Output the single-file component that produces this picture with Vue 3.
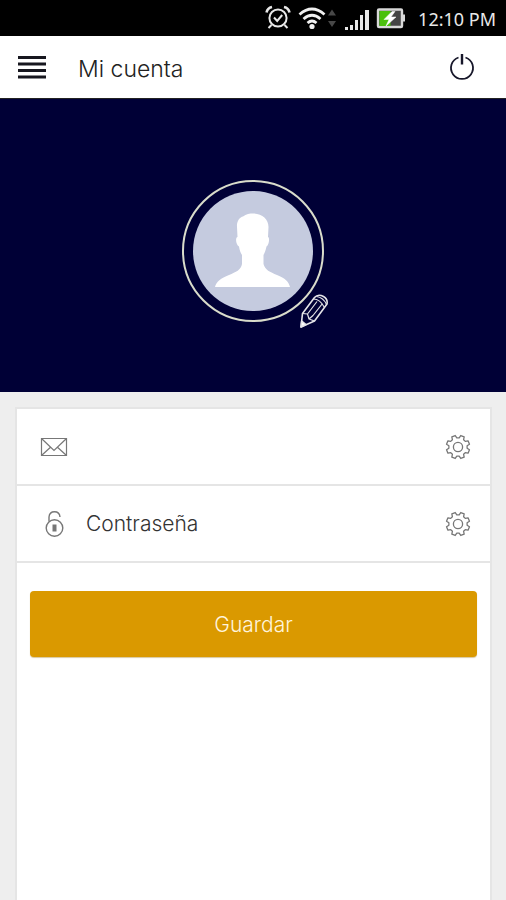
<script setup>
import { ref } from 'vue'

const email = ref('')
const password = ref('')

// Eight-toothed cog outline around (14, 14)
const gearPath = (() => {
  const points = []
  const at = (deg, r) => {
    const a = (deg * Math.PI) / 180
    points.push(`${(14 + r * Math.cos(a)).toFixed(2)} ${(14 + r * Math.sin(a)).toFixed(2)}`)
  }
  for (let i = 0; i < 8; i++) {
    const c = 22.5 + i * 45
    at(c - 15, 9.2)
    at(c - 9, 11.8)
    at(c + 9, 11.8)
    at(c + 15, 9.2)
  }
  return `M${points.join('L')}Z`
})()
</script>

<template>
  <div class="screen">
    <div class="status">
      <svg class="status-icons" width="142" height="28" viewBox="264 4 142 28" aria-hidden="true">
        <g fill="none" stroke="#e8e8e8" stroke-width="2">
          <circle cx="278" cy="18" r="8.6" />
          <path d="M274 17.500l3.200 3.500l5-6M271.500 25l-3 3M284.500 25l3 3" />
          <path d="M266.500 12.500q1-4.500 5.500-5.500M289.500 12.500q-1-4.500-5.500-5.500" stroke-width="2.600" />
        </g>
        <g fill="none" stroke="#f0f0f0" stroke-width="2.800">
          <path d="M299.500 14.500q12.500-11 25 0M303.500 19q8.500-7.500 17 0M307.500 23q4.500-4 9 0" />
        </g>
        <circle cx="312" cy="26.500" r="2.600" fill="#f0f0f0" />
        <path d="M328 15.500l4-6l4 6zM328 21l4 6l4-6z" fill="#484848" />
        <path d="M345 27h3v3h-3zM350 25h3v5h-3zM355 20h3v10h-3zM360 15h3v15h-3zM365 10h4v20h-4z" fill="#e8e8e8" />
        <rect x="378" y="9.500" width="24" height="17.500" rx="1" fill="#444" stroke="#d8d8d8" stroke-width="2.400" />
        <path d="M379.500 11h11v15h-11z" fill="#4bc00c" />
        <path d="M402 14.500h3v7h-3z" fill="#d8d8d8" />
        <path d="M392 11.500l-8 8h5l-3 6.500l10-9h-5l4-5.500z" fill="#fff" stroke="#fff" stroke-width=".5" />
      </svg>
      <span class="clock">12:10 PM</span>
    </div>

    <header class="bar">
      <button class="icon-button" type="button" aria-label="Menú">
        <svg width="30" height="24" viewBox="0 0 30 24">
          <path d="M1 2.500h28M1 9h28M1 15.500h28M1 22h28" stroke="#17171f" stroke-width="2.800" />
        </svg>
      </button>
      <h1>Mi cuenta</h1>
      <button class="icon-button" type="button" aria-label="Salir">
        <svg width="28" height="28" viewBox="0 0 28 28" fill="none" stroke="#17172a">
          <path d="M10.500 4.500a11 11 0 1 0 7 0" stroke-width="1.800" />
          <path d="M14 1v10.500" stroke-width="2.400" />
        </svg>
      </button>
    </header>

    <section class="hero">
      <div class="avatar">
        <svg class="portrait" width="120" height="120" viewBox="0 0 120 120" aria-hidden="true">
          <circle cx="60" cy="60" r="60" fill="#c5cbdf" />
          <path
            d="M60 22.500C69 22.500 75.500 28 75.500 36L75 46C77 46.500 76 54 73.500 55.500C72.500 60 71.500 62 70.500 64V73C72 79 77 81 84 84C92 87 96 91 97 96H22C23 91 28 87 36 84C43 81 48 79 49 73V64C47.500 62 46.500 59 46 55.500C43 54 42 46.500 44.500 46L44 36C43.500 30 47 26 50 25.500C53 23 57 22.500 60 22.500Z"
            fill="#fff"
          />
        </svg>
        <button class="edit" type="button" aria-label="Cambiar foto">
          <svg width="30" height="34" viewBox="0 0 30 34" fill="none" stroke="#e4e4e8" stroke-width="1.600" stroke-linejoin="round">
            <path d="M2 33L3.500 19.500L15.500 3.500Q19-.5 24.500 2.500Q29 5 28 10L15.500 27Z" />
            <path d="M3.500 19.500L8.500 20L10 25L15.500 27M8.500 20L18 7.500M10 25L14 21.500L23.500 9.500M14.500 5Q21 5 25.500 13.500M17.500 2.500Q24.500 3.500 27.500 10.500" stroke-width="1.200" />
            <path d="M2 33l.700-6l4.300 3.500z" fill="#fff" />
          </svg>
        </button>
      </div>
    </section>

    <main class="content">
      <form class="card" @submit.prevent>
        <div class="row">
          <label class="lead" for="email" aria-label="Correo electrónico">
            <svg width="28" height="28" viewBox="0 0 28 28" fill="none" stroke="#777" stroke-width="1.200">
              <path d="M1.500 5.500h25v17h-25zM1.500 5.500L14 17.500L26.500 5.500M1.500 22.500L10.500 14.200M26.500 22.500L17.500 14.200" />
            </svg>
          </label>
          <input id="email" v-model="email" type="email" />
          <button class="icon-button" type="button" aria-label="Configurar correo">
            <svg width="28" height="28" viewBox="0 0 28 28" fill="none" stroke="#777" stroke-width="1.300" stroke-linejoin="round">
              <path :d="gearPath" />
              <circle cx="14" cy="14" r="4.600" />
            </svg>
          </button>
        </div>
        <div class="row">
          <label class="lead" for="password" aria-label="Contraseña">
            <svg width="28" height="28" viewBox="0 0 28 28" fill="none" stroke="#777" stroke-width="1.400">
              <circle cx="14.500" cy="18" r="8.300" />
              <path d="M9 11.500V7Q9.500 1.800 14.500 1.800Q19.500 1.800 20 7" />
              <path d="M12.500 14.500h4v7h-4z" fill="#777" stroke="none" />
            </svg>
          </label>
          <input id="password" v-model="password" type="password" placeholder="Contraseña" />
          <button class="icon-button" type="button" aria-label="Configurar contraseña">
            <svg width="28" height="28" viewBox="0 0 28 28" fill="none" stroke="#777" stroke-width="1.300" stroke-linejoin="round">
              <path :d="gearPath" />
              <circle cx="14" cy="14" r="4.600" />
            </svg>
          </button>
        </div>
        <div class="actions">
          <button class="save" type="submit">Guardar</button>
        </div>
      </form>
    </main>
  </div>
</template>

<style>
body {
  margin: 0;
}
</style>

<style scoped>
.screen {
  display: flex;
  flex-direction: column;
  min-height: 100vh;
  background: #eee;
  color: #222;
  font-family: Inter, "Liberation Sans", sans-serif;
  font-weight: 300;
}

svg {
  display: block;
}

button {
  padding: 0;
  border: 0;
  background: none;
  font: inherit;
  cursor: pointer;
}

.status {
  display: flex;
  align-items: center;
  justify-content: flex-end;
  gap: 12px;
  height: 36px;
  padding: 0 10px;
  background: #000;
}

.clock {
  padding-top: 1px;
  color: #e8e8e8;
  font-family: "Noto Sans", sans-serif;
  font-size: 18px;
  font-weight: 400;
  line-height: 24px;
}

.bar {
  display: flex;
  align-items: center;
  height: 62px;
  padding: 0 30px 0 17px;
  border-bottom: 1px solid #222;
  background: #fff;
}

.bar h1 {
  flex: 1;
  margin: 0 0 0 31px;
  padding-top: 3px;
  font-size: 23px;
  font-weight: 300;
  line-height: 32px;
}

.hero {
  display: flex;
  align-items: center;
  justify-content: center;
  padding: 81px 0 70px;
  background: #000036;
}

.avatar {
  position: relative;
  display: flex;
  padding: 9px;
  border: 2px solid #d9dccb;
  border-radius: 50%;
}

.edit {
  position: absolute;
  right: -7px;
  bottom: -8px;
}

.content {
  display: flex;
  flex: 1;
  flex-direction: column;
  padding: 15px 14px 0 15px;
}

.card {
  flex: 1;
  border: 2px solid #e5e5e5;
  border-bottom: 0;
  background: #fff;
}

.row {
  display: flex;
  align-items: center;
  height: 75px;
  padding: 0 18px 0 23px;
  border-bottom: 2px solid #e5e5e5;
}

.row input {
  flex: 1;
  min-width: 0;
  margin: 0 16px 0 18px;
  padding: 0;
  border: 0;
  outline: 0;
  background: none;
  color: #333;
  font: inherit;
  font-size: 21px;
  line-height: 32px;
}

.row input::placeholder {
  color: #333;
  opacity: 1;
}

.actions {
  display: flex;
  padding: 28px 13px;
}

.save {
  flex: 1;
  height: 66px;
  border-radius: 4px;
  background: #da9900;
  box-shadow: 0 1px 1px #d8c8a0;
  color: #fff4dc;
  font-size: 21px;
}
</style>
